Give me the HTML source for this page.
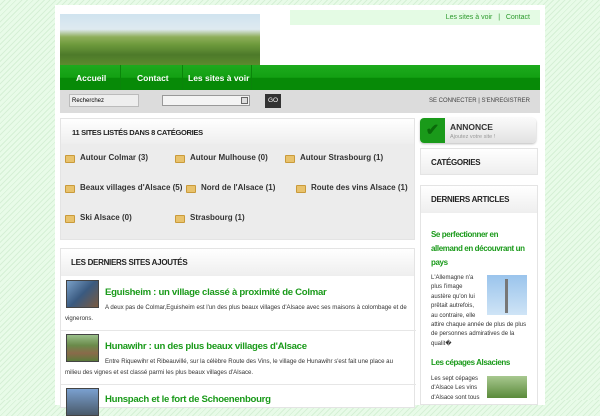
<!DOCTYPE html>
<html><head><meta charset="utf-8"><style>
*{margin:0;padding:0;box-sizing:border-box}
body{width:600px;height:400px;overflow:hidden;font-family:"Liberation Sans",sans-serif;background:#e6fbe6 repeating-linear-gradient(135deg,#e8fbe8 0 3px,#d6f0d6 3px 4px);position:relative}
.abs{position:absolute}
#page{left:55px;top:5px;width:490px;height:400px;background:#fff}
#banner{left:60px;top:14px;width:200px;height:51px;background:linear-gradient(#cfe3ef 0,#dfeaf0 30%,#8fae5a 45%,#6d9a3c 60%,#4d7a2a 80%,#5c8a2e 100%)}
#toplinks{left:290px;top:10px;width:250px;height:15px;background:#e4fbe4;font-size:7px;color:#2c9a2c;text-align:right;padding:4px 10px 0 0}
#nav{left:60px;top:65px;width:480px;height:25px;background:linear-gradient(#1daa1d 0,#13a013 50%,#078a07 52%,#078a07 100%)}
#nav span{position:absolute;top:8px;font-size:8.5px;font-weight:bold;color:#fff}
#nav i{position:absolute;top:0;width:1px;height:25px;background:#0a850a}
#sbar{left:60px;top:90px;width:480px;height:23px;background:#dcdcdc}
.box{background:#fff;border:1px solid #e4e4e4}
.hd{font-size:7.5px;font-weight:bold;color:#222;letter-spacing:-.3px;background:linear-gradient(#fff,#eee)}
.cat{position:absolute;font-size:8px;font-weight:bold;color:#333}
.cat:before{content:"";position:absolute;left:-15px;top:2px;width:8px;height:6px;background:#e8c26c;border:1px solid #c99a3a;border-radius:1px}
.t{font-size:9.6px;color:#1a9a1a;letter-spacing:-.3px;font-weight:bold}
.d{font-size:6.1px;color:#333;line-height:10px}
.th{position:absolute;width:33px;height:28px;border:1px solid #444}
</style></head><body>
<div id="page" class="abs"></div>
<div id="banner" class="abs"></div>
<div id="toplinks" class="abs">Les sites à voir &nbsp;&nbsp;|&nbsp;&nbsp; Contact</div>
<div id="nav" class="abs">
<span style="left:16px">Accueil</span><i style="left:60px"></i>
<span style="left:77px">Contact</span><i style="left:122px"></i>
<span style="left:128px">Les sites à voir</span><i style="left:191px"></i>
</div>
<div id="sbar" class="abs">
<div class="abs" style="left:9px;top:4px;width:70px;height:13px;background:#eee;border:1px solid #bbb;font-size:6px;padding:3px 2px">Recherchez</div>
<div class="abs" style="left:102px;top:5px;width:88px;height:11px;background:#f4f4f4;border:1px solid #999"><div class="abs" style="right:1px;top:1px;width:7px;height:7px;border:1px solid #666;background:#ddd"></div></div>
<div class="abs" style="left:205px;top:4px;width:16px;height:14px;background:#333;color:#fff;font-size:6.5px;text-align:center;padding-top:3px">GO</div>
<div class="abs" style="right:10px;top:8px;font-size:6px;color:#444">SE CONNECTER | S'ENREGISTRER</div>
</div>
<div class="abs box" style="left:60px;top:118px;width:355px;height:122px;background:#ececec">
<div class="hd" style="height:25px;padding:9px 0 0 11px">11 SITES LISTÉS DANS 8 CATÉGORIES</div>
<span class="cat" style="left:19px;top:34px">Autour Colmar (3)</span>
<span class="cat" style="left:129px;top:34px">Autour Mulhouse (0)</span>
<span class="cat" style="left:239px;top:34px">Autour Strasbourg (1)</span>
<span class="cat" style="left:19px;top:64px">Beaux villages d'Alsace (5)</span>
<span class="cat" style="left:140px;top:64px">Nord de l'Alsace (1)</span>
<span class="cat" style="left:250px;top:64px">Route des vins Alsace (1)</span>
<span class="cat" style="left:19px;top:94px">Ski Alsace (0)</span>
<span class="cat" style="left:129px;top:94px">Strasbourg (1)</span>
</div>
<div class="abs box" style="left:60px;top:248px;width:355px;height:160px">
<div class="hd" style="height:27px;padding:9px 0 0 10px;font-size:8px">LES DERNIERS SITES AJOUTÉS</div>
<div class="th" style="left:5px;top:31px;background:linear-gradient(135deg,#7aa0c8,#3a5a80 50%,#7a5a40)"></div>
<div class="abs t" style="left:44px;top:38px">Eguisheim : un village classé à proximité de Colmar</div>
<div class="abs d" style="left:44px;top:54px">A deux pas de Colmar,Eguisheim est l'un des plus beaux villages d'Alsace avec ses maisons à colombage et de</div>
<div class="abs d" style="left:4px;top:65px">vignerons.</div>
<div class="abs" style="left:0;top:81px;width:355px;height:1px;background:#e6e6e6"></div>
<div class="th" style="left:5px;top:85px;background:linear-gradient(#9ac08a,#6a8a4a 40%,#8a6a4a 70%,#5a7a3a)"></div>
<div class="abs t" style="left:44px;top:92px">Hunawihr : un des plus beaux villages d'Alsace</div>
<div class="abs d" style="left:44px;top:108px">Entre Riquewihr et Ribeauvillé, sur la célèbre Route des Vins, le village de Hunawihr s'est fait une place au</div>
<div class="abs d" style="left:4px;top:119px">milieu des vignes et est classé parmi les plus beaux villages d'Alsace.</div>
<div class="abs" style="left:0;top:135px;width:355px;height:1px;background:#e6e6e6"></div>
<div class="th" style="left:5px;top:139px;background:linear-gradient(#7aa0d0,#4a5a6a)"></div>
<div class="abs t" style="left:44px;top:145px">Hunspach et le fort de Schoenenbourg</div>
</div>
<div class="abs" style="left:420px;top:118px;width:116px;height:25px;border-radius:4px;background:linear-gradient(#fafafa,#e2e2e2);box-shadow:0 1px 2px #bbb"></div>
<div class="abs" style="left:420px;top:118px;width:25px;height:25px;border-radius:4px 0 0 4px;background:#1a9a1a;color:#0a6a0a;font-size:16px;text-align:center;line-height:25px;font-weight:bold">✔</div>
<div class="abs" style="left:450px;top:122px;font-size:8.5px;font-weight:bold;color:#333">ANNONCE</div>
<div class="abs" style="left:450px;top:134px;font-size:5.5px;color:#999">Ajoutez votre site !</div>
<div class="abs box hd" style="left:420px;top:148px;width:118px;height:27px;padding:9px 0 0 10px;font-size:8px">CATÉGORIES</div>
<div class="abs box" style="left:420px;top:185px;width:118px;height:220px">
<div class="hd" style="height:27px;padding:9px 0 0 10px;font-size:8px">DERNIERS ARTICLES</div>
<div class="abs" style="left:10px;top:42px;width:100px;font-size:8px;font-weight:bold;color:#1a9a1a;line-height:14px;letter-spacing:-.4px">Se perfectionner en allemand en découvrant un pays</div>
<div class="abs" style="left:66px;top:89px;width:40px;height:40px;background:linear-gradient(#9ac4ec,#cfe4f6)"><div class="abs" style="left:18px;top:4px;width:3px;height:34px;background:#777"></div></div>
<div class="abs" style="left:10px;top:88px;width:100px;font-size:6px;color:#333;line-height:9.4px"><div style="width:48px;white-space:nowrap">L'Allemagne n'a<br>plus l'image<br>austère qu'on lui<br>prêtait autrefois,<br>au contraire, elle</div>attire chaque année de plus de plus de personnes admiratives de la qualit�</div>
<div class="abs" style="left:10px;top:172px;font-size:8px;font-weight:bold;color:#1a9a1a;letter-spacing:-.4px">Les cépages Alsaciens</div>
<div class="abs" style="left:66px;top:190px;width:40px;height:22px;background:linear-gradient(#a8c890,#5a8a3a)"></div>
<div class="abs" style="left:10px;top:189px;width:52px;font-size:6px;color:#333;line-height:9.4px">Les sept cépages d'Alsace Les vins d'Alsace sont tous</div>
</div>
</body></html>
